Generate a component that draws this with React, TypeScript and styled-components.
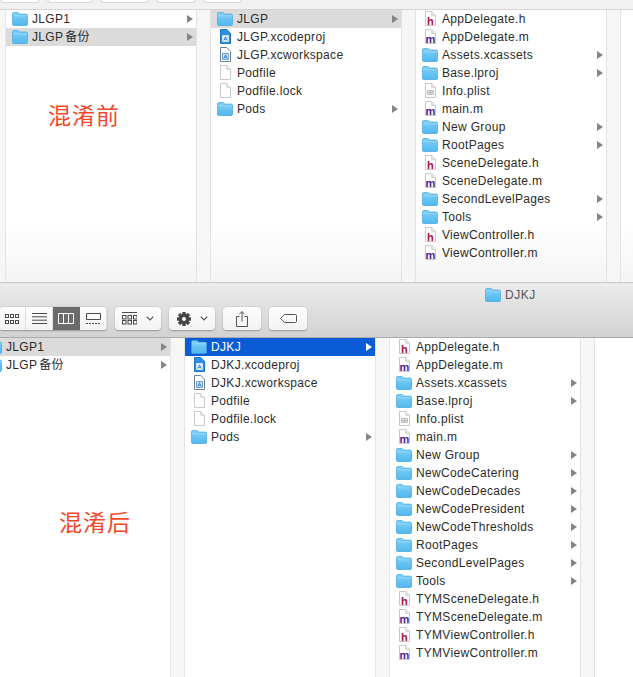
import React from "react";
import styled, { createGlobalStyle } from "styled-components";

const Global = createGlobalStyle`
  html, body { margin: 0; padding: 0; background: #fff; }
  body { width: 633px; height: 677px; overflow: hidden; font-family: "Liberation Sans", "Noto Sans CJK SC", sans-serif; }
`;

const Page = styled.div`
  width: 633px;
  height: 677px;
  overflow: hidden;
  display: flex;
  flex-direction: column;
`;
const TopStub = styled.div`
  height: 10px;
  flex: none;
  background: #f1f1f1;
  border-bottom: 1px solid #d4d4d4;
  display: flex;
  gap: 7px;
  align-items: flex-end;
  padding-bottom: 6px;
  box-sizing: border-box;
`;
const StubButton = styled.div<{ $w: number }>`
  width: ${(p) => p.$w}px;
  height: 6px;
  background: #fdfdfd;
  border: 1px solid #d8d8d8;
  border-top: none;
  border-radius: 0 0 4px 4px;
  box-sizing: border-box;
`;
const Browser = styled.div<{ $h: number; $fade?: boolean; $start: number }>`
  position: relative;
  height: ${(p) => p.$h}px;
  flex: none;
  display: flex;
  overflow: hidden;
  background: ${(p) => (p.$fade ? "linear-gradient(#fff 78%, #f4f4f4)" : "#fff")};
  padding-left: ${(p) => p.$start}px;
  &::before {
    content: "";
    display: ${(p) => (p.$start > 0 ? "block" : "none")};
    position: absolute;
    left: 0;
    top: 0;
    bottom: 0;
    width: ${(p) => p.$start - 1}px;
    background: #f6f6f6;
    border-right: 1px solid #e6e6e6;
  }
`;
const Column = styled.div<{ $offset?: number }>`
  position: relative;
  width: 190px;
  flex: none;
  margin-left: ${(p) => p.$offset ?? 0}px;
`;
const Gutter = styled.div`
  flex: none;
  box-sizing: border-box;
  width: 15px;
  background: #f6f6f6;
  border-left: 1px solid #e4e4e4;
  border-right: 1px solid #e4e4e4;
`;
const Row = styled.div<{ $sel?: "grey" | "blue" }>`
  height: 18px;
  display: flex;
  align-items: center;
  padding: 0 3px 0 6px;
  font-size: 12px;
  line-height: 18px;
  letter-spacing: 0.33px;
  color: ${(p) => (p.$sel === "blue" ? "#fff" : "#2b2b2b")};
  background: ${(p) => (p.$sel === "blue" ? "#0a5cd6" : p.$sel === "grey" ? "#dbdbdb" : "transparent")};
`;
const IconBox = styled.span`
  width: 16px;
  height: 16px;
  flex: none;
  margin-right: 4px;
  display: flex;
  align-items: center;
  justify-content: center;
`;
const Name = styled.span<{ $cjk?: boolean }>`
  flex: 1;
  height: 18px;
  white-space: nowrap;
  overflow: hidden;
  word-spacing: ${(p) => (p.$cjk ? "-1.5px" : "0")};
`;
const Arrow = styled.span<{ $white?: boolean }>`
  width: 0;
  height: 0;
  border-top: 4px solid transparent;
  border-bottom: 4px solid transparent;
  border-left: 6px solid ${(p) => (p.$white ? "#fff" : "#858585")};
`;
const Note = styled.div<{ $x: number; $y: number }>`
  position: absolute;
  left: ${(p) => p.$x}px;
  top: ${(p) => p.$y}px;
  font-size: 23px;
  line-height: 28px;
  letter-spacing: 1px;
  color: #f5482a;
  font-family: "Noto Sans CJK SC", sans-serif;
  font-weight: 400;
`;
const TitleBar = styled.div`
  flex: none;
  height: 56px;
  box-sizing: border-box;
  border-top: 1px solid #c9c9c9;
  border-bottom: 1px solid #ababab;
  background: linear-gradient(#ececec, #d2d2d2);
  display: flex;
  flex-direction: column;
`;
const Title = styled.div`
  height: 24px;
  flex: none;
  padding-left: 485px;
  display: flex;
  align-items: center;
  gap: 4px;
  font-size: 12px;
  letter-spacing: 0.5px;
  color: #555;
`;
const Tools = styled.div`
  display: flex;
  gap: 8px;
`;
const ToolBtn = styled.div<{ $w: number }>`
  width: ${(p) => p.$w}px;
  height: 23px;
  box-sizing: border-box;
  background: linear-gradient(#fdfdfd, #f3f3f3);
  border-radius: 4px;
  box-shadow: 0 0.5px 1.5px rgba(0, 0, 0, 0.3);
  display: flex;
  align-items: center;
  justify-content: center;
  gap: 9px;
`;
const ViewGroup = styled(ToolBtn)`
  margin-left: -1px;
  gap: 0;
  overflow: hidden;
  justify-content: flex-start;
`;
const Seg = styled.div<{ $on?: boolean }>`
  width: 27px;
  height: 23px;
  flex: none;
  box-sizing: border-box;
  display: flex;
  align-items: center;
  justify-content: center;
  color: ${(p) => (p.$on ? "#fff" : "#4a4a4a")};
  background: ${(p) => (p.$on ? "#6b6b6b" : "transparent")};
  border-right: 1px solid ${(p) => (p.$on ? "#6b6b6b" : "#dedede")};
`;

const Folder = ({ w = 16 }: { w?: number }) => (
  <svg width={w} height={w * 0.875} viewBox="0 0 16 14">
    <defs>
      <linearGradient id="fg" x1="0" y1="0" x2="0" y2="1">
        <stop offset="0" stopColor="#7fd0f7" />
        <stop offset="1" stopColor="#52b8ef" />
      </linearGradient>
    </defs>
    <path d="M.5 2C.5 1 1 .5 2 .5h3.6c.6 0 .9.2 1.2.6l.8 1h6.4c1 0 1.500.5 1.500 1.500V12c0 1-.5 1.500-1.500 1.500H2C1 13.500.5 13 .5 12Z" fill="url(#fg)" stroke="#3fa5dc" strokeWidth=".7" />
    <path d="M.8 3.800h14.400" stroke="#a8e0fa" strokeWidth=".7" />
  </svg>
);
const Page0 = "M1.500.5h6.300l3.700 3.700V14.500H1.500Z";
const Doc = ({ children }: { children?: React.ReactNode }) => (
  <svg width="13" height="16" viewBox="0 0 13 16">
    <path d={Page0} fill="#fff" stroke="#c9c9c9" strokeWidth="1" />
    <path d="M7.800.5v3.700h3.700" fill="#f2f2f2" stroke="#c9c9c9" strokeWidth="1" />
    {children}
  </svg>
);
const Letter = styled.text`
  font-family: "Liberation Sans", sans-serif;
  font-weight: 700;
  font-size: 11px;
  text-anchor: middle;
`;
const HDoc = () => (
  <Doc>
    <Letter x="6.500" y="13.500" fill="#a5143a">h</Letter>
  </Doc>
);
const MDoc = () => (
  <Doc>
    <Letter x="6.500" y="13.500" fill="#4b1d96">m</Letter>
  </Doc>
);
const PlistDoc = () => (
  <Doc>
    <path d="M3.500 7.500h6v4h-6ZM3.500 9.500h6M6.500 7.500v4" fill="#e6e6e6" stroke="#aaa" strokeWidth=".7" />
  </Doc>
);
const ProjDoc = ({ dark }: { dark?: boolean }) => (
  <svg width="13" height="16" viewBox="0 0 13 16">
    <path d={Page0} fill={dark ? "#fff" : "#2c8fe0"} stroke={dark ? "#6f7f90" : "#1c74c4"} />
    <path d="M3.500 6.500h6v6h-6Z" fill={dark ? "#cfe3f6" : "#e5f3ff"} stroke={dark ? "#1d6bb8" : "#fff"} strokeWidth=".6" />
    <path d="M4.800 11.500 6.500 7.800l1.700 3.700M5.400 10.300h2.200" fill="none" stroke="#1c6fc0" strokeWidth=".8" />
  </svg>
);

type Kind = "folder" | "h" | "m" | "proj" | "work" | "doc" | "plist";
type Item = { n: string; k: Kind; sel?: "grey" | "blue" };

const icon = (k: Kind) => {
  switch (k) {
    case "folder": return <Folder />;
    case "h": return <HDoc />;
    case "m": return <MDoc />;
    case "proj": return <ProjDoc />;
    case "work": return <ProjDoc dark />;
    case "plist": return <PlistDoc />;
    default: return <Doc />;
  }
};

const List = ({ items, cjk }: { items: Item[]; cjk?: boolean }) => (
  <>
    {items.map((it) => (
      <Row key={it.n} $sel={it.sel}>
        <IconBox>{icon(it.k)}</IconBox>
        <Name $cjk={cjk}>{it.n}</Name>
        {it.k === "folder" && <Arrow $white={it.sel === "blue"} />}
      </Row>
    ))}
  </>
);

const f = (n: string, sel?: "grey" | "blue"): Item => ({ n, k: "folder", sel });
const h = (n: string): Item => ({ n, k: "h" });
const m = (n: string): Item => ({ n, k: "m" });

const topA: Item[] = [f("JLGP1"), f("JLGP 备份", "grey")];
const topB: Item[] = [f("JLGP", "grey"), { n: "JLGP.xcodeproj", k: "proj" }, { n: "JLGP.xcworkspace", k: "work" }, { n: "Podfile", k: "doc" }, { n: "Podfile.lock", k: "doc" }, f("Pods")];
const topC: Item[] = [h("AppDelegate.h"), m("AppDelegate.m"), f("Assets.xcassets"), f("Base.lproj"), { n: "Info.plist", k: "plist" }, m("main.m"), f("New Group"), f("RootPages"), h("SceneDelegate.h"), m("SceneDelegate.m"), f("SecondLevelPages"), f("Tools"), h("ViewController.h"), m("ViewController.m")];
const botA: Item[] = [f("JLGP1", "grey"), f("JLGP 备份")];
const botB: Item[] = [f("DJKJ", "blue"), { n: "DJKJ.xcodeproj", k: "proj" }, { n: "DJKJ.xcworkspace", k: "work" }, { n: "Podfile", k: "doc" }, { n: "Podfile.lock", k: "doc" }, f("Pods")];
const botC: Item[] = [h("AppDelegate.h"), m("AppDelegate.m"), f("Assets.xcassets"), f("Base.lproj"), { n: "Info.plist", k: "plist" }, m("main.m"), f("New Group"), f("NewCodeCatering"), f("NewCodeDecades"), f("NewCodePresident"), f("NewCodeThresholds"), f("RootPages"), f("SecondLevelPages"), f("Tools"), h("TYMSceneDelegate.h"), m("TYMSceneDelegate.m"), h("TYMViewController.h"), m("TYMViewController.m")];

const Grid3 = () => (
  <svg width="14" height="12" viewBox="0 0 14 12" fill="none" stroke="currentColor">
    {[0, 5, 10].map((x) => [1, 7].map((y) => <rect key={`${x}${y}`} x={x + 0.5} y={y + 0.5} width="3" height="3" />))}
  </svg>
);
const Lines = () => (
  <svg width="15" height="11" viewBox="0 0 15 11" stroke="currentColor"><path d="M0 .5h15M0 3.800h15M0 7.200h15M0 10.500h15" /></svg>
);
const Cols = () => (
  <svg width="16" height="11" viewBox="0 0 16 11" fill="none" stroke="currentColor" strokeWidth="1"><path d="M.5.500h15v10H.5ZM5.500.5v10M10.500.5v10" /></svg>
);
const Cover = () => (
  <svg width="15" height="11" viewBox="0 0 15 11" fill="none" stroke="currentColor"><path d="M.5.500h14v6H.5Z" /><path d="M0 10.500h15" strokeDasharray="2 1" /></svg>
);
const GroupIcon = () => (
  <svg width="15" height="13" viewBox="0 0 15 13" fill="none" stroke="#4a4a4a">
    <path d="M0 .5h15" />
    {[0, 5.500, 11].map((x) => [3, 8].map((y) => <rect key={`${x}${y}`} x={x + 0.5} y={y + 0.5} width="3.500" height="3.500" />))}
  </svg>
);
const Chevron = () => (
  <svg width="8" height="5" viewBox="0 0 8 5" fill="none" stroke="#555" strokeWidth="1.200"><path d="M.7.700 4 4 7.300.7" /></svg>
);
const Gear = () => (
  <svg width="14" height="14" viewBox="0 0 14 14">
    <g fill="#444">
      {[0, 45, 90, 135].map((a) => (
        <rect key={a} x="5.300" y="0" width="3.400" height="14" rx=".6" transform={`rotate(${a} 7 7)`} />
      ))}
      <circle cx="7" cy="7" r="5" />
    </g>
    <circle cx="7" cy="7" r="2" fill="#f8f8f8" />
  </svg>
);
const Share = () => (
  <svg width="12" height="16" viewBox="0 0 12 16" fill="none" stroke="#555"><path d="M3.500 5.500H.5v10h11v-10h-3M6 10.500V.8M3.500 3 6 .6 8.500 3" /></svg>
);
const Tag = () => (
  <svg width="17" height="9" viewBox="0 0 17 9" fill="none" stroke="#555"><path d="M4.500.5h11c.6 0 1 .4 1 1v6c0 .6-.4 1-1 1h-11L.6 4.500Z" /></svg>
);

export default function App() {
  return (
    <Page>
      <Global />
      <TopStub>
        <StubButton $w={40} />
        <StubButton $w={46} />
        <StubButton $w={49} />
        <StubButton $w={40} />
        <StubButton $w={39} />
      </TopStub>
      <Browser $h={272} $fade $start={6}>
        <Column><List items={topA} cjk /></Column>
        <Gutter />
        <Column><List items={topB} /></Column>
        <Gutter />
        <Column><List items={topC} /></Column>
        <Gutter />
        <Note $x={48} $y={90}>混淆前</Note>
      </Browser>
      <TitleBar>
        <Title><Folder /> DJKJ</Title>
        <Tools>
          <ViewGroup $w={108}>
            <Seg><Grid3 /></Seg>
            <Seg><Lines /></Seg>
            <Seg $on><Cols /></Seg>
            <Seg><Cover /></Seg>
          </ViewGroup>
          <ToolBtn $w={46}><GroupIcon /><Chevron /></ToolBtn>
          <ToolBtn $w={46}><Gear /><Chevron /></ToolBtn>
          <ToolBtn $w={38}><Share /></ToolBtn>
          <ToolBtn $w={38}><Tag /></ToolBtn>
        </Tools>
      </TitleBar>
      <Browser $h={339} $start={0}>
        <Column $offset={-20}><List items={botA} cjk /></Column>
        <Gutter />
        <Column><List items={botB} /></Column>
        <Gutter />
        <Column><List items={botC} /></Column>
        <Gutter />
        <Note $x={59} $y={169}>混淆后</Note>
      </Browser>
    </Page>
  );
}
